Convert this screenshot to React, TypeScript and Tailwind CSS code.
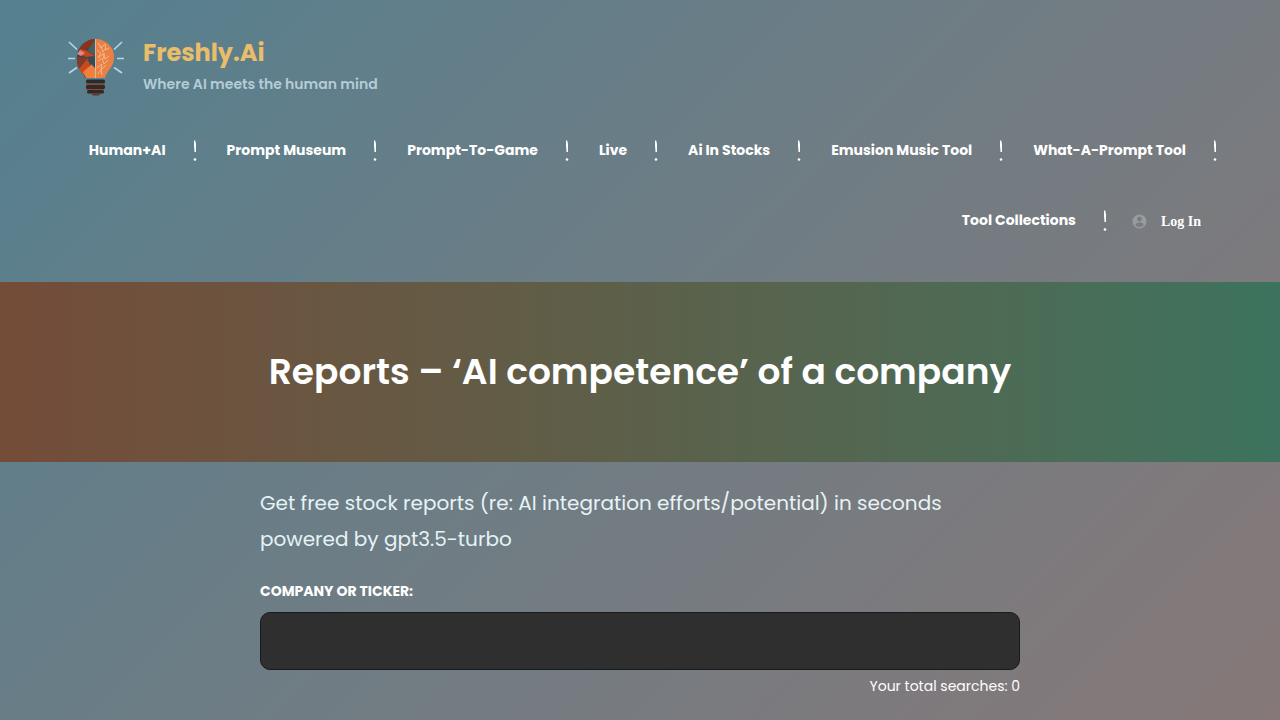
import React from 'react';

const NAV_ITEMS = [
  'Human+AI',
  'Prompt Museum',
  'Prompt-To-Game',
  'Live',
  'Ai In Stocks',
  'Emusion Music Tool',
  'What-A-Prompt Tool',
  'Tool Collections',
];

const App: React.FC = () => (
  <div className="min-h-screen bg-linear-135 from-[#54808f] to-[#867878] font-['Poppins','Inter',sans-serif] text-white">
    <header className="px-16 pt-9 pb-[27px]">
      <a href="#" className="flex w-fit items-center gap-[15px]">
        <BulbLogo />
        <div className="pb-0.5">
          <p className="text-2xl leading-[34px] font-bold text-[#e9bd69]">Freshly.Ai</p>
          <p className="text-sm leading-7 font-semibold text-[#b5ccd6]">Where AI meets the human mind</p>
        </div>
      </a>

      <nav className="-mr-0.5 -ml-2 mt-[15px]">
        <ul className="flex flex-wrap justify-end">
          {NAV_ITEMS.map(item => (
            <li key={item} className="flex h-[70px] items-center">
              <a href="#" className="pr-[27px] pl-[29px] text-sm font-bold whitespace-nowrap">{item}</a>
              <Separator />
            </li>
          ))}
          <li className="flex h-[70px] items-center pt-0.5 pr-[17px] pl-6">
            <button className="flex items-center gap-[14px]">
              <UserIcon />
              <span className="pt-0.5 font-['Liberation_Serif',serif] text-sm font-bold">Log In</span>
            </button>
          </li>
        </ul>
      </nav>
    </header>

    <section className="flex h-[180px] items-center justify-center bg-linear-to-r from-[#744c38] via-[#5c604a] to-[#3c735e] px-4">
      <h1 className="text-center text-4xl font-semibold">Reports – ‘AI competence’ of a company</h1>
    </section>

    <main className="mx-auto max-w-[760px] pt-[23px] pb-6">
      <p className="text-xl leading-9 text-[#e6f3f6]">
        Get free stock reports (re: AI integration efforts/potential) in seconds
        <br />
        powered by gpt3.5-turbo
      </p>
      <label htmlFor="company" className="mt-6 block text-sm font-bold">COMPANY OR TICKER:</label>
      <input
        id="company"
        type="text"
        className="mt-[11px] block h-[58px] w-full rounded-[10px] border border-[#161b1d] bg-[#2f2f2f] px-4 text-white"
      />
      <p className="mt-1 text-right text-sm leading-6">Your total searches: 0</p>
    </main>
  </div>
);

const Separator: React.FC = () => (
  <svg width="5" height="22" viewBox="0 0 5 22" fill="#fff" aria-hidden="true">
    <path d="M1 1.500h1.200L3 5v8H1.500L1 6z" />
    <circle cx="2" cy="20.500" r="1.300" />
  </svg>
);

const UserIcon: React.FC = () => (
  <svg width="15" height="15" viewBox="0 0 15 15" aria-hidden="true">
    <path
      fill="#999b9d"
      fillRule="evenodd"
      d="M7.5.5a7 7 0 1 0 0 14 7 7 0 0 0 0-14zm0 2.2a2.4 2.4 0 1 1 0 4.8 2.4 2.4 0 0 1 0-4.8zM3.3 10.7c1-1.8 2.3-2.3 4.2-2.3s3.200.5 4.2 2.300c-1 1.500-2.500 2.200-4.200 2.200s-3.200-.7-4.200-2.200z"
    />
  </svg>
);

const BulbLogo: React.FC = () => (
  <svg width="64" height="64" viewBox="0 0 64 64" fill="none" aria-hidden="true">
    <path d="M5 6l8 7.500M4 22.500h7M5 37l8-5.500M58 6l-8 7.500M60 22.500h-7M58 37l-8-5.500" stroke="#b7d3e6" strokeWidth="1.700" />
    <path d="M31 3C19 4 12 13 13 24c0 9 6 10 8 18h10z" fill="#354a52" />
    <path d="M20 7l8-4 3 1-3 7-8 3-4-1z" fill="#8c3219" />
    <path d="M31 4l-8 11 8 4z" fill="#4c5e5f" />
    <path d="M16 13l5 1 10 6-9 1-7-3z" fill="#c9431f" />
    <path d="M13 18l3-4 5 3-4 3z" fill="#ee8274" />
    <path d="M13 21l11 1-9 11-2-6z" fill="#843a2a" />
    <path d="M24 22l-9 11 4 6 7-10z" fill="#c94a20" />
    <path d="M29 27l3 8v7H22l-3-6z" fill="#f47e3b" />
    <path d="M23 24l8-3v11z" fill="#354a52" />
    <path d="M31 3c11 0 20 8 19 20-1 9-7 11-9 19H31z" fill="#ea8044" />
    <path
      d="M34 7l3 5 4-4 1 6 3-2M33 14l4 3-3 5 6-5 1 6 4-3M34 25l4-3 2 6 4-4M33 32l5-4-1 6 5-5M34 38l3-4 1 5M37 10l2 6 3-4M39 18l1 5"
      stroke="#f9c29b"
      strokeWidth=".8"
    />
    <path d="M31.500 3v39" stroke="#c9c1ac" />
    <rect x="22" y="43.500" width="19" height="4" rx="1.500" fill="#2f2928" />
    <path d="M22 48.500h19M22 53.500h18" stroke="#8e4938" />
    <rect x="22" y="49" width="19" height="4" rx="1.500" fill="#2f2928" />
    <rect x="23" y="54" width="17" height="3.500" rx="1.500" fill="#2f2928" />
    <path d="M27 57.500h10l-2 2h-6z" fill="#693529" />
  </svg>
);

export default App;
